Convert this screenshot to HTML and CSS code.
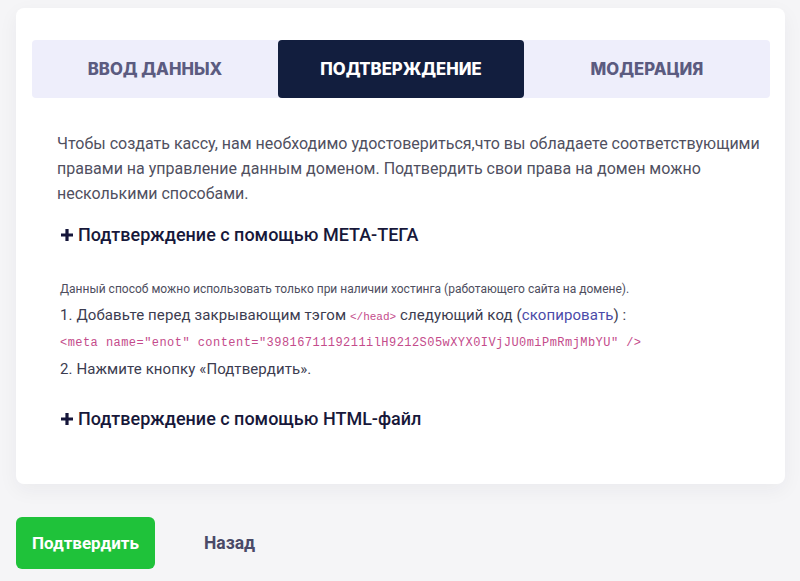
FILE: index.html
```html
<!DOCTYPE html>
<html lang="ru">
<head>
    <meta charset="UTF-8">
    <meta name="viewport" content="width=device-width, initial-scale=1.0">
    <title>Подтверждение домена</title>
    <link rel="stylesheet" href="styles.css">
</head>
<body>
    <div class="page">
        <div class="card">
            <div class="tabs">
                <div class="tab">ВВОД ДАННЫХ</div>
                <div class="tab tab-active">ПОДТВЕРЖДЕНИЕ</div>
                <div class="tab">МОДЕРАЦИЯ</div>
            </div>

            <div class="content">
                <p class="intro">Чтобы создать кассу, нам необходимо удостовериться,что вы обладаете соответствующими правами на управление данным доменом. Подтвердить свои права на домен можно несколькими способами.</p>

                <h3 class="method">
                    <svg class="plus" width="14" height="14" viewBox="0 0 14 14"><path d="M7 1v12M1 7h12" stroke="#15163a" stroke-width="3.2"/></svg>
                    Подтверждение с помощью МЕТА-ТЕГА
                </h3>
                <div class="method-body">
                    <p class="note">Данный способ можно использовать только при наличии хостинга (работающего сайта на домене).</p>
                    <p class="step">1. Добавьте перед закрывающим тэгом <code class="tag">&lt;/head&gt;</code> следующий код (<a href="#" class="copy">скопировать</a>) :</p>
                    <p class="code">&lt;meta name="enot" content="3981671119211ilH9212S05wXYX0IVjJU0miPmRmjMbYU" /&gt;</p>
                    <p class="step">2. Нажмите кнопку «Подтвердить».</p>
                </div>

                <h3 class="method method-last">
                    <svg class="plus" width="14" height="14" viewBox="0 0 14 14"><path d="M7 1v12M1 7h12" stroke="#15163a" stroke-width="3.2"/></svg>
                    Подтверждение с помощью HTML-файл
                </h3>
            </div>
        </div>

        <div class="actions">
            <button class="btn-confirm">Подтвердить</button>
            <a href="#" class="btn-back">Назад</a>
        </div>
    </div>
</body>
</html>
```

FILE: styles.css
```css
body {
    margin: 0;
    background-color: #f5f5f7;
    font-family: Roboto, "Liberation Sans", sans-serif;
}
.page {
    padding: 8px 15px 0 16px;
}
.card {
    height: 476px;
    box-sizing: border-box;
    padding: 32px 15px 0 16px;
    background-color: #ffffff;
    border-radius: 8px;
    box-shadow: 0 6px 20px rgba(30, 30, 60, 0.05);
}
.tabs {
    display: grid;
    grid-template-columns: 1fr 1fr 1fr;
    height: 58px;
    border-radius: 4px;
    background-color: #eeeefb;
}
.tab {
    display: flex;
    align-items: center;
    justify-content: center;
    font-family: Inter, sans-serif;
    font-weight: 800;
    font-size: 16.7px;
    color: #5b5b80;
    border-radius: 4px;
}
.tab-active {
    background-color: #121e3e;
    color: #ffffff;
}
.content {
    padding: 0 0 0 25px;
}
.intro {
    margin: 33px 0 0;
    font-size: 16px;
    line-height: 25px;
    color: #50505f;
}
.method {
    display: flex;
    align-items: center;
    gap: 4px;
    margin: 17px 0 0 3px;
    font-size: 18px;
    line-height: 24px;
    font-weight: 500;
    color: #17183a;
}
.plus {
    flex-shrink: 0;
}
.method-body {
    padding-left: 3px;
    margin-top: 29px;
}
.method-body p {
    margin: 0;
    line-height: 26px;
}
.note {
    font-size: 12px;
    color: #4e4e5e;
}
.step {
    font-size: 15px;
    letter-spacing: 0.1px;
    color: #3c3c50;
}
.tag {
    font-family: "Liberation Mono", monospace;
    font-size: 11px;
    letter-spacing: 0;
    color: #c44b8b;
}
.copy {
    color: #4b4ba8;
    text-decoration: none;
}
.code {
    font-family: "Liberation Mono", monospace;
    font-size: 12px;
    letter-spacing: 0.45px;
    color: #c44b8b;
}
.method-last {
    margin-top: 25px;
}
.actions {
    display: flex;
    align-items: center;
    gap: 49px;
    margin-top: 33px;
}
.btn-confirm {
    width: 139px;
    height: 52px;
    border: none;
    border-radius: 6px;
    background-color: #1fc23a;
    color: #ffffff;
    font-family: Roboto, sans-serif;
    font-weight: 700;
    font-size: 17px;
    cursor: pointer;
}
.btn-back {
    font-weight: 700;
    font-size: 17.5px;
    color: #4a4a68;
    text-decoration: none;
}
```
